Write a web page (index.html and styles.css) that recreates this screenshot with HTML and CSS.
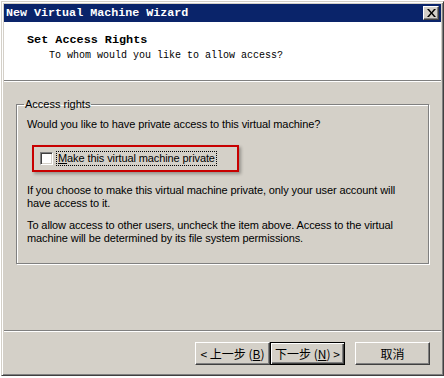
FILE: index.html
```html
<!DOCTYPE html>
<html>
<head>
<meta charset="utf-8">
<link rel="stylesheet" href="styles.css">
</head>
<body>
<div class="window">
  <div class="titlebar">
    <span class="title">New Virtual Machine Wizard</span>
    <span class="close"><svg width="9" height="8" viewBox="0 0 9 8"><path d="M0 0h2l2.5 3 2.5-3h2L5.5 4 9 8H7L4.5 5 2 8H0l3.5-4z" fill="#000"/></svg></span>
  </div>
  <div class="header">
    <div class="h-title">Set Access Rights</div>
    <div class="h-sub">To whom would you like to allow access?</div>
  </div>
  <div class="body">
    <fieldset class="group">
      <legend>Access rights</legend>
      <p class="q">Would you like to have private access to this virtual machine?</p>
      <div class="highlight">
        <span class="cb"></span>
        <span class="cb-label"><u>M</u>ake this virtual machine private</span>
      </div>
      <p class="para">If you choose to make this virtual machine private, only your user account will have access to it.</p>
      <p class="para">To allow access to other users, uncheck the item above. Access to the virtual machine will be determined by its file system permissions.</p>
    </fieldset>
  </div>
  <div class="footer">
    <div class="btns">
      <button class="btn">&lt; 上一步 (<u>B</u>)</button>
      <button class="btn default">下一步 (<u>N</u>) &gt;</button>
      <button class="btn cancel">取消</button>
    </div>
  </div>
</div>
</body>
</html>
```
FILE: styles.css
```css
html, body { margin: 0; padding: 0; background: #ffffff; }
body { width: 444px; height: 378px; overflow: hidden; }
.window {
  box-sizing: border-box;
  margin: 1px 0 0 1px;
  width: 443px;
  height: 375px;
  background: #d4d0c8;
  border-left: 1px solid #d4d0c8;
  border-top: 1px solid #d4d0c8;
  border-right: 1px solid #404040;
  border-bottom: 1px solid #404040;
  box-shadow: inset 1px 1px 0 #ffffff, inset -1px -1px 0 #808080;
  padding: 2px;
  display: flex;
  flex-direction: column;
}
.titlebar {
  height: 18px;
  flex: none;
  background: #0a246a;
  display: flex;
  align-items: center;
  justify-content: space-between;
  padding: 0 2px 0 2px;
}
.title {
  color: #ffffff;
  font-family: "Liberation Mono", monospace;
  font-weight: bold;
  font-size: 11.7px;
}
.close {
  width: 16px; height: 14px;
  box-sizing: border-box;
  background: #d4d0c8;
  border-top: 1px solid #ffffff;
  border-left: 1px solid #ffffff;
  border-right: 1px solid #404040;
  border-bottom: 1px solid #404040;
  box-shadow: inset -1px -1px 0 #808080;
  display: flex; align-items: center; justify-content: center;
}
.header {
  height: 59px;
  flex: none;
  background: #ffffff;
  border-bottom: 1px solid #808080;
  box-shadow: 0 1px 0 #ffffff;
  box-sizing: border-box;
  padding: 11px 0 0 23px;
  font-family: "Liberation Mono", monospace;
}
.h-title { font-weight: bold; font-size: 11.8px; line-height: 14px; }
.h-sub { font-size: 10px; line-height: 13px; padding-left: 22px; margin-top: 2px; }
.body { flex: 1; padding: 17px 0 0 12px; }
.group {
  margin: 0;
  height: 166px;
  width: 413px;
  box-sizing: border-box;
  border: 1px solid #808080;
  box-shadow: inset 1px 1px 0 #ffffff, 1px 1px 0 #ffffff;
  padding: 2px 10px 0 10px;
  font-family: "Liberation Sans", Arial, sans-serif;
  font-size: 11px;
  color: #000;
}
.group legend { padding: 0 1px; margin-left: -3px; font-size: 11px; }
.q { margin: 6px 0 0 0; line-height: 13px; letter-spacing: -0.1px; }
.highlight {
  margin: 14px 0 0 5px;
  width: 207px;
  height: 27px;
  border: 2px solid #c80000;
  box-shadow: 2px 2px 3px rgba(0,0,0,0.3);
  display: flex;
  align-items: center;
  padding-left: 6px;
  box-sizing: border-box;
}
.cb {
  width: 13px; height: 13px;
  box-sizing: border-box;
  background: #fff;
  border-top: 1px solid #808080;
  border-left: 1px solid #808080;
  border-right: 1px solid #ffffff;
  border-bottom: 1px solid #ffffff;
  box-shadow: inset 1px 1px 0 #404040, inset -1px -1px 0 #d4d0c8;
}
.cb-label {
  margin-left: 4px;
  outline: 1px dotted #000;
  padding: 0 1px;
  line-height: 13px;
  letter-spacing: -0.1px;
}
.para { margin: 12px 0 0 0; line-height: 13px; letter-spacing: -0.1px; }
.para + .para { margin-top: 9px; }
.footer {
  height: 43px;
  flex: none;
  border-top: 1px solid #808080;
  box-shadow: inset 0 1px 0 #ffffff;
  display: flex;
  justify-content: flex-end;
  padding: 11px 11px 0 0;
  box-sizing: border-box;
}
.btns { display: flex; }
.btn {
  width: 75px; height: 23px;
  box-sizing: border-box;
  background: #d4d0c8;
  border-top: 1px solid #ffffff;
  border-left: 1px solid #ffffff;
  border-right: 1px solid #404040;
  border-bottom: 1px solid #404040;
  box-shadow: inset -1px -1px 0 #808080;
  font-family: "Noto Sans CJK SC", "Liberation Sans", sans-serif;
  font-size: 12px;
  padding: 0;
  margin: 0;
  color: #000;
  line-height: 19px;
}
.btn.default {
  border: 1px solid #000;
  box-shadow: inset 1px 1px 0 #ffffff, inset -1px -1px 0 #404040, inset -2px -2px 0 #808080;
}
.btn.cancel { margin-left: 10px; }
```
